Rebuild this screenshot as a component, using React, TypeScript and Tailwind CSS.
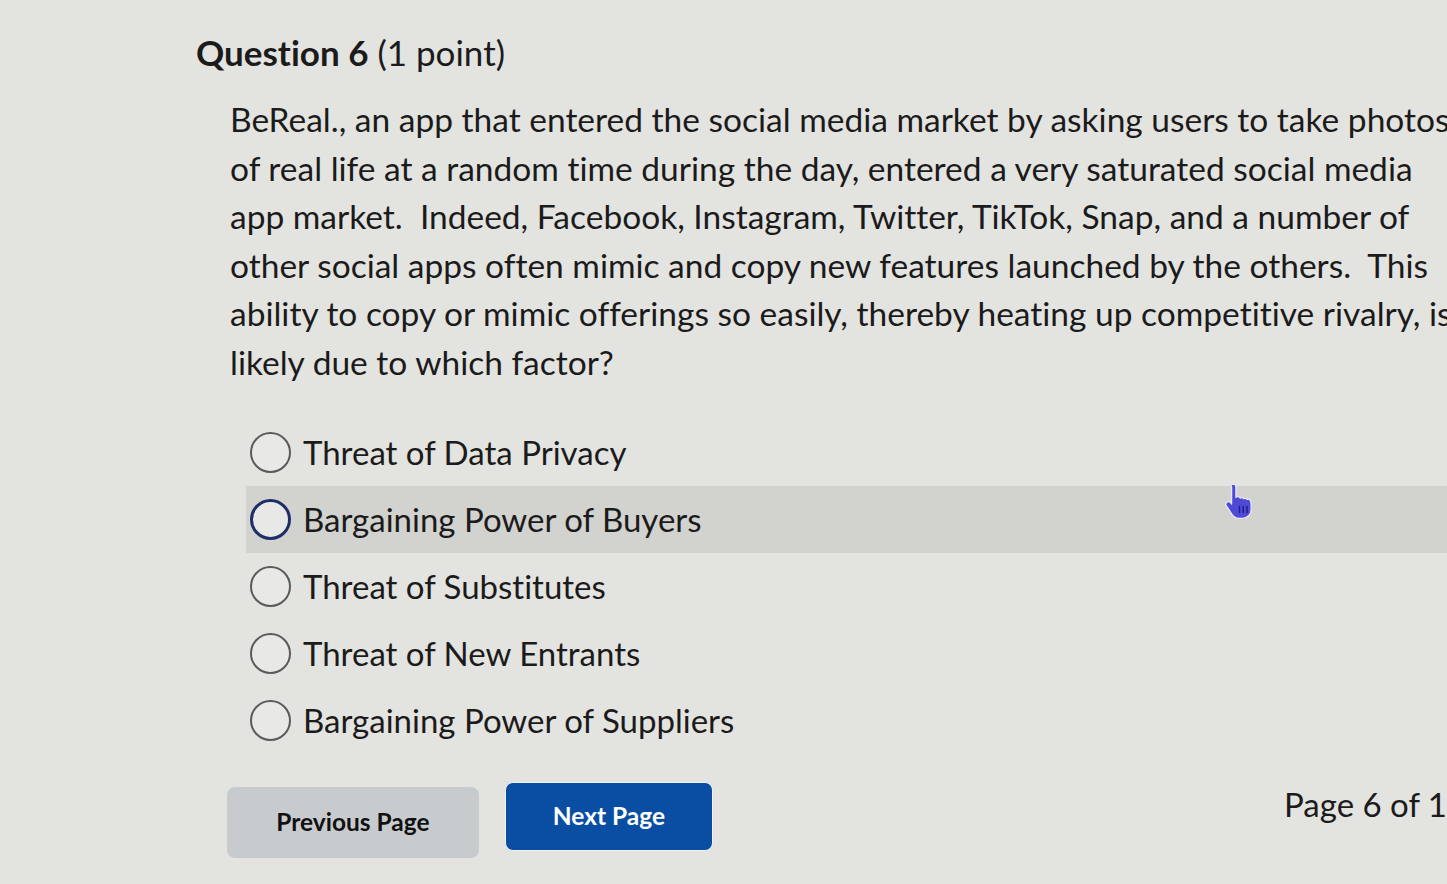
import React from "react";

const lines = [
  "BeReal., an app that entered the social media market by asking users to take photos",
  "of real life at a random time during the day, entered a very saturated social media",
  "app market.  Indeed, Facebook, Instagram, Twitter, TikTok, Snap, and a number of",
  "other social apps often mimic and copy new features launched by the others.  This",
  "ability to copy or mimic offerings so easily, thereby heating up competitive rivalry, is",
  "likely due to which factor?",
];

const options = [
  "Threat of Data Privacy",
  "Bargaining Power of Buyers",
  "Threat of Substitutes",
  "Threat of New Entrants",
  "Bargaining Power of Suppliers",
];

const HandCursor: React.FC = () => (
  <svg width="36" height="38" viewBox="0 0 28 30" className="absolute left-[1224px] top-[481px]">
    <path
      d="M7 2.5c1.3 0 2.2 1 2.2 2.2v8.2l.6-.3c1.1-.6 2.3-.1 2.8.9.9-.6 2.1-.4 2.7.5.9-.5 2.1-.3 2.7.6.9-.4 2-.1 2.6.9.5.9.6 2 .6 3v4.1c0 3.7-3 6.9-6.9 6.9h-2.6c-2.3 0-4.4-1.2-5.6-3.1l-4.5-6.9c-.6-1-.3-2.2.6-2.8.9-.6 2-.4 2.7.4l.9 1.1V4.7C4.8 3.5 5.8 2.5 7 2.5z"
      fill="#4f4ad6"
      stroke="#e9e8fb"
      strokeWidth="1"
      strokeLinejoin="round"
    />
    <path d="M12 20v5M15 20v5M18 20v5" stroke="#1f1d80" strokeWidth="1.1" strokeLinecap="round" />
  </svg>
);

export default function App() {
  return (
    <div className="relative w-[1447px] h-[884px] overflow-hidden bg-[#e3e3e0] font-['Lato','Open_Sans',sans-serif] text-[#1b1b1b] [font-variant-ligatures:none]">
      <div className="pl-[196px] pt-[30px]">
        <h2 className="text-[35px] leading-[44px] whitespace-nowrap">
          <span className="font-bold">Question 6</span> (1 point)
        </h2>

        <div className="pl-[34px] mt-[21px] text-[33.5px] leading-[48.5px] whitespace-pre">
          {lines.map((l) => (
            <div key={l}>{l}</div>
          ))}
        </div>

        <div className="ml-[50px] mt-[33px] flex flex-col">
          {options.map((o, i) => (
            <div
              key={o}
              className={
                i === 1
                  ? "flex items-center gap-[12px] h-[67px] pl-[4px] bg-[#d2d2cf]"
                  : "flex items-center gap-[12px] h-[67px] pl-[4px]"
              }
            >
              <span
                className={
                  i === 1
                    ? "w-[41px] h-[41px] rounded-full border-[3px] border-[#1d2f66] bg-[#e8e8e6] shrink-0"
                    : "w-[41px] h-[41px] rounded-full border-2 border-[#5a5a5a] bg-[#e8e8e6] shrink-0"
                }
              />
              <span className="text-[33px] whitespace-nowrap">{o}</span>
            </div>
          ))}
        </div>

        <div className="ml-[31px] mt-[28px] flex items-start">
          <button className="w-[255px] h-[71px] rounded-lg bg-[#c8cbce] text-[24.5px] font-bold text-[#111] mt-[5px]">
            Previous Page
          </button>
          <button className="ml-[26px] w-[211px] h-[69px] rounded-lg bg-[#0a4ea4] text-[24.5px] font-bold text-white border border-[#f2f2f2]">
            Next Page
          </button>
          <div className="ml-[571px] text-[33px] leading-[44px] whitespace-nowrap">Page 6 of 1</div>
        </div>
      </div>

      <HandCursor />
    </div>
  );
}
